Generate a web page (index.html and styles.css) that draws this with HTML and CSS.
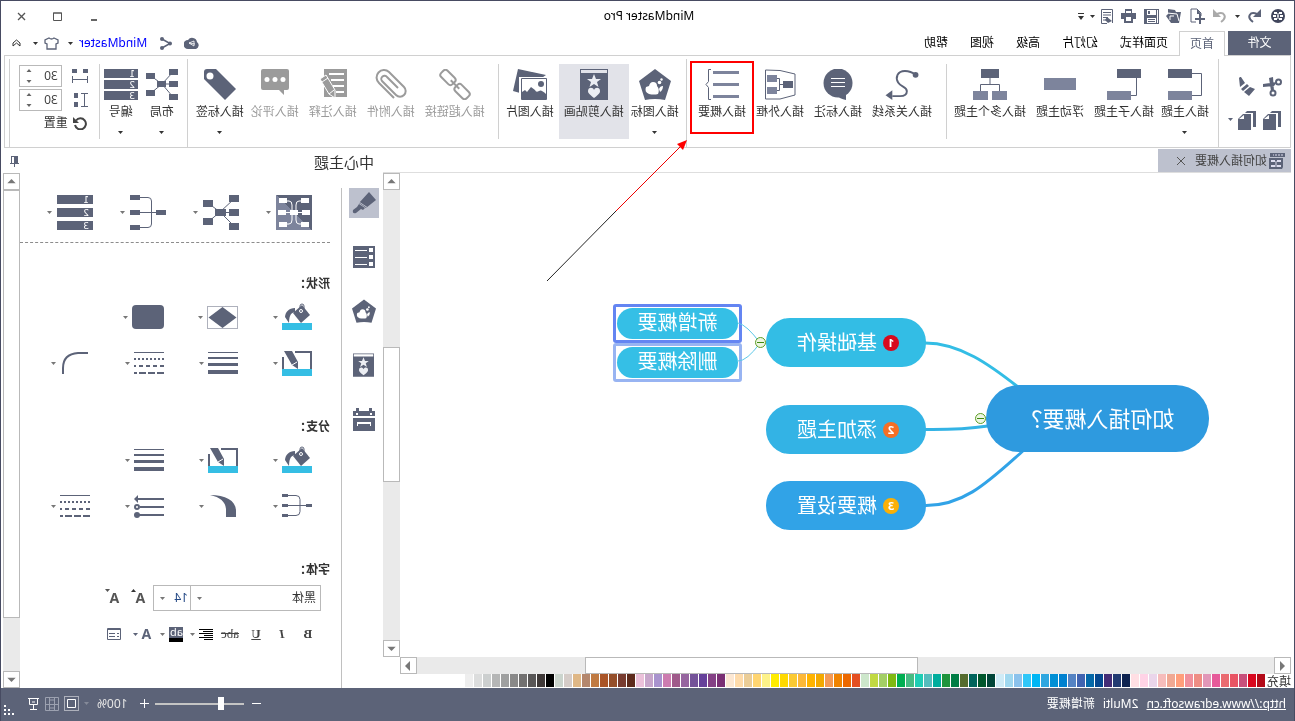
FILE: index.html
```html
<!DOCTYPE html>
<html lang="zh-CN">
<head>
<meta charset="utf-8">
<title>MindMaster Pro</title>
<link rel="stylesheet" href="styles.css">
</head>
<body>
<svg class="defs" aria-hidden="true">
  <defs>
    <linearGradient id="shade" x1="0" y1="0" x2="1" y2="1"><stop offset=".5" stop-color="#5c6378"/><stop offset=".5" stop-color="#7d849c"/></linearGradient>
    <symbol id="caret" viewBox="0 0 5 3"><path d="M0 0h5L2.500 3z" fill="currentColor"/></symbol>
    <symbol id="fill" viewBox="0 0 30 28"><path d="M0 20h30v7H0z" fill="#35bee4"/><path d="M10 2 19 10 11 20 2 12z" fill="currentColor"/><path d="M8 6V3a2 2 0 0 1 4 0v4" fill="none" stroke="currentColor"/><circle cx="11" cy="8" r="1.500" fill="#5c6378" stroke="#fff"/><path d="M17 5c6 0 10 4 10 9l-4 6c0-6-1-10-6-11z" fill="currentColor"/></symbol>
    <symbol id="pen" viewBox="0 0 30 25"><path d="M0 18h30v7H0z" fill="#35bee4"/><path d="M0 0h17v2H2v16H0zM28 6h2v12h-2zM20 0h8L20 14l-6 4V11z" fill="currentColor"/><path d="m15 11 5 3" stroke="#fff"/></symbol>
    <symbol id="weights" viewBox="0 0 30 23"><path d="M0 0h30v1H0zM0 5h30v2H0zM0 11h30v3H0zM0 18h30v4H0z" fill="currentColor"/></symbol>
    <symbol id="dashes" viewBox="0 0 30 23"><g stroke="currentColor" stroke-width="2"><path d="M0 .5h30" stroke-width="1"/><path d="M0 7h30" stroke-dasharray="2 2"/><path d="M0 14h30" stroke-dasharray="4 3"/><path d="M0 21h30" stroke-dasharray="7 2"/></g></symbol>
    <symbol id="pentagon" viewBox="0 0 32 31"><path d="M16 0 32 12 26 31Q16 29 6 31L0 12z" fill="currentColor"/><path d="M13 25q-2-5 1-8 0-4 4-4 3 0 4 4l3 1q2 5-3 7-5 1-9 0z" fill="#fff"/><path d="M8 17q3 0 4 3l-1 3q-3-2-3-6z" fill="#fff"/><circle cx="11.500" cy="13.500" r="1.800" fill="#fff"/><circle cx="9.500" cy="10.500" r="1.200" fill="#fff"/></symbol>
    <symbol id="clip" viewBox="0 0 28 31"><path d="M0 0h28v1H0zM0 0h1v5H0zM27 0h1v5h-1zM0 4h28v27H0z" fill="currentColor"/><path d="m14 5 2 5h5l-4 3 1.500 5-4.500-3-4.500 3 1.500-5-4-3h5zM14 29c-5-4-6-5-6-7 0-4 5-4 6-1 1-3 6-3 6 1 0 2-1 3-6 7z" fill="#eceef3"/></symbol>
    <symbol id="copy" viewBox="0 0 18 20"><path d="M0 1h9v1H1v15H0zM0 1h9l2 2H3v14H0z" fill="currentColor"/><path d="M5 4h8l5 5v11H5z" fill="currentColor"/><path d="m12 5 5 4h-5z" fill="#fff"/></symbol>
    <symbol id="tree" viewBox="0 0 36 35"><path d="M0 15h10v5H0zM26 0h10v5H26zM26 15h10v5H26zM26 30h10v5H26z" fill="currentColor"/><path d="M10 17.500h16M26 2.500h-8q-3.500 0-3.500 3.500v23q0 3.500 3.500 3.500h8" fill="none" stroke="currentColor"/></symbol>
    <symbol id="up" viewBox="0 0 10 6"><path d="M5 0 10 5H0z" fill="currentColor"/></symbol>
  </defs>
</svg>
<div class="app">
  <header class="titlebar">
    <div class="quick">
      <svg width="14" height="14" viewBox="0 0 14 14"><circle cx="7" cy="7" r="7" fill="#41465c"/><path d="M3 3h3v2H3zM8 3h3v2H8zM3 9h3v2H3zM8 9h3v2H8zM2 6h3v2H2zM9 6h3v2H9z" fill="#fff"/><path d="M6 7h2M7 4v6" stroke="#fff"/></svg>
      <button class="q-undo" aria-label="撤销"><svg width="14" height="14" viewBox="0 0 14 14"><path d="M8 13C15 8 11 2 4 5" fill="none" stroke="currentColor" stroke-width="2"/><path d="M0 0v8h8z" fill="currentColor"/></svg></button>
      <svg class="q-caret" width="5" height="3"><use href="#caret"/></svg>
      <button class="q-btn pale" aria-label="重做"><svg width="14" height="14" viewBox="0 0 14 14"><path d="M6 13C-1 8 3 2 10 5" fill="none" stroke="currentColor" stroke-width="2"/><path d="M14 0v8H6z" fill="currentColor"/></svg></button>
      <button class="q-btn" aria-label="新建"><svg width="15" height="16" viewBox="0 0 15 16"><path d="M4 8V5l4-4h6v13H9" fill="none" stroke="currentColor"/><path d="M8 1v5H4M0 10h4V6h2v4h4v2H6v4H4v-4H0z" fill="currentColor"/></svg></button>
      <button class="q-btn" aria-label="打开"><svg width="16" height="14" viewBox="0 0 16 14"><path d="M1 3h5l1-2 7-1v5l2 2-5 7H3z" fill="currentColor"/><path d="m3 12 2-7 10-1M8 7h4v4" fill="none" stroke="#fff"/></svg></button>
      <button class="q-btn" aria-label="保存"><svg width="15" height="15" viewBox="0 0 15 15"><path d="M0 0h15v15H0z" fill="currentColor"/><path d="M3 1h9v5H3zM3 9h9v5H3zM1 1h1v13H1z" fill="#fff"/><path d="M9 2h2v3H9zM4 10h7v1H4zM4 12h7v1H4z" fill="currentColor"/></svg></button>
      <button class="q-btn" aria-label="打印"><svg width="15" height="14" viewBox="0 0 15 14"><path d="M4 0h7v4h4v6h-3v4H3v-4H0V4h4z" fill="currentColor"/><path d="M5 8h5v4H5zM5 2h5v2H5z" fill="#fff"/></svg></button>
      <button class="q-btn narrow" aria-label="预览"><svg width="12" height="15" viewBox="0 0 12 15"><path d="M.5.5h11v14H6M.5.5V14M2 3.500h8M2 6h8M5 8.500h5M7 11h3" fill="none" stroke="currentColor"/><path d="m1 12 5-4 2 3-3 3z" fill="currentColor"/></svg></button>
      <svg class="q-caret" width="5" height="3"><use href="#caret"/></svg>
      <svg class="q-more" width="6" height="7" viewBox="0 0 6 7"><path d="M0 0h6v1H0zM0 3h6L3 7z" fill="#333"/></svg>
    </div>
    <h1 class="title">MindMaster Pro</h1>
    <div class="window-controls">
      <button aria-label="最小化"><svg width="9" height="9" viewBox="0 0 9 9"><path d="M1 7h6v2H1z" fill="#666"/></svg></button>
      <button aria-label="最大化"><svg width="9" height="9" viewBox="0 0 9 9"><path d="M.5 1h8v7.500h-8zM0 1h9" fill="none" stroke="#555"/></svg></button>
      <button aria-label="关闭"><svg width="9" height="9" viewBox="0 0 9 9"><path d="m1 1 7 7M8 1 1 8" stroke="#555" stroke-width="1.300"/></svg></button>
    </div>
  </header>

  <nav class="tabs">
    <button class="tab file">文件</button>
    <button class="tab active">首页</button>
    <button class="tab">页面样式</button>
    <button class="tab">幻灯片</button>
    <button class="tab">高级</button>
    <button class="tab">视图</button>
    <button class="tab">帮助</button>
    <div class="account">
      <svg width="16" height="12" viewBox="0 0 16 12"><path d="M4 12a4 4 0 0 1-1-7 5 5 0 0 1 9-2 4.500 4.500 0 0 1 0 9z" fill="#5c6378"/><path d="M11 6 6 4v5zM11 6 5 7" fill="none" stroke="#fff" stroke-width=".8"/></svg>
      <svg class="share" width="13" height="13" viewBox="0 0 13 13"><path d="m11 2-8 4.500L11 11" fill="none" stroke="#5c6378" stroke-width="1.500"/><circle cx="11" cy="2" r="2" fill="#5c6378"/><circle cx="3" cy="6.500" r="2" fill="#5c6378"/><circle cx="11" cy="11" r="2" fill="#5c6378"/></svg>
      <a href="#" class="user">MindMaster</a>
      <svg width="5" height="3"><use href="#caret"/></svg>
      <svg class="skin" width="15" height="13" viewBox="0 0 15 13"><path d="M5 1 1 3v3l2 1v5h9V7l2-1V3l-4-2q-2.500 2-5 0z" fill="none" stroke="#5c6378" stroke-width="1.300"/></svg>
      <svg width="5" height="3"><use href="#caret"/></svg>
      <svg class="collapse" width="9" height="8" viewBox="0 0 9 8"><path d="m1 4 3.500-3L8 4v3L4.500 4 1 7z" fill="none" stroke="#333"/></svg>
    </div>
  </nav>

  <section class="ribbon" aria-label="首页">
    <div class="group clipboard">
      <button aria-label="剪切"><svg width="20" height="20" viewBox="0 0 20 20"><g fill="none" stroke="currentColor" stroke-width="2"><circle cx="3.500" cy="5" r="2.500"/><circle cx="9" cy="16" r="2.500"/></g><path d="m5 5 14 2v3L8 9zM8 14 9 0l4 1-2 13z" fill="currentColor"/></svg></button>
      <button aria-label="格式刷"><svg width="18" height="20" viewBox="0 0 18 20"><path d="m16 0 1 1-1 9-5-4 4-6zM9 7l6 5-2 2-6-5zM6 10l6 5-5 4L1 12z" fill="currentColor"/></svg></button>
      <button aria-label="复制"><svg width="18" height="20"><use href="#copy"/></svg></button>
      <button class="paste" aria-label="粘贴"><svg width="18" height="20"><use href="#copy"/></svg><svg width="5" height="3"><use href="#caret"/></svg></button>
    </div>
    <div class="group first">
      <button class="tool menu"><svg width="34" height="31" viewBox="0 0 34 31"><path d="M10 4.500H.5v22H10" fill="none" stroke="currentColor"/><path d="M10 0h24v9H10z" fill="currentColor"/><path d="M10 22h24v9H10z" fill="#7d849c"/></svg><span>插入主题</span><svg class="down" width="5" height="3"><use href="#caret"/></svg></button>
      <button class="tool"><svg width="34" height="31" viewBox="0 0 34 31"><path d="M4.500 9v17.500H10" fill="none" stroke="currentColor"/><path d="M0 0h24v9H0z" fill="currentColor"/><path d="M10 22h24v9H10z" fill="#7d849c"/></svg><span>插入子主题</span></button>
      <button class="tool"><svg width="32" height="31" viewBox="0 0 32 31"><path d="M0 9h32v12H0z" fill="#7d849c"/></svg><span>浮动主题</span></button>
      <button class="tool"><svg width="34" height="31" viewBox="0 0 34 31"><path d="M17 9v6.500M7.500 22v-6.500h19V22" fill="none" stroke="currentColor"/><path d="M8 0h18v9H8z" fill="currentColor"/><path d="M0 22h15v9H0zM19 22h15v9H19z" fill="#7d849c"/></svg><span>插入多个主题</span></button>
    </div>
    <div class="group full">
      <button class="tool"><svg width="34" height="32" viewBox="0 0 34 32"><path d="M3 6Q8 2 14 2C22 2 24 9 21 14S12 18 12 23Q12 28 19 28h8" fill="none" stroke="currentColor" stroke-width="2"/><circle cx="3" cy="6" r="3" fill="currentColor"/><path d="m34 27-7-5v10z" fill="currentColor"/></svg><span>插入关系线</span></button>
      <button class="tool"><svg width="30" height="31" viewBox="0 0 30 31"><circle cx="15" cy="14" r="14.500" fill="currentColor"/><path d="M7 24v7q6-1 10-5z" fill="currentColor"/><path d="M8 9.500h14M8 13.500h14M8 17.500h14" stroke="#fff"/></svg><span>插入标注</span></button>
      <button class="tool"><svg width="32" height="31" viewBox="0 0 32 31"><path d="m1 5 15-3.500L30.500 1v29H16L1 26z" fill="none" stroke="currentColor"/><path d="M12 15.500h4.500M20 9.500h-3.500v12H20" fill="none" stroke="currentColor"/><path d="M3 12h10v7H3z" fill="currentColor"/><path d="M19 6h10v7H19zM19 18h10v7H19z" fill="#7d849c"/></svg><span>插入外框</span></button>
      <button class="tool marked"><svg width="34" height="31" viewBox="0 0 34 31"><path d="M0 2h26v3H0zM0 14h26v3H0zM0 26h26v3H0z" fill="#7d849c"/><path d="M28 .5h2.500v12l2.500 3-2.500 3v12H28" fill="none" stroke="currentColor"/></svg><span>插入概要</span></button>
    </div>
    <div class="group third">
      <button class="tool menu"><svg width="32" height="31"><use href="#pentagon"/></svg><span>插入图标</span><svg class="down" width="5" height="3"><use href="#caret"/></svg></button>
      <button class="tool on"><svg width="28" height="31"><use href="#clip"/></svg><span>插入剪贴画</span></button>
      <button class="tool"><svg width="34" height="31" viewBox="0 0 34 31"><path d="m1 6 28-6 5 22-7 2z" fill="currentColor"/><path d="M-1 8h29v24H-1z" fill="#fff"/><path d="M.5 9.500h25v21H.5z" fill="#fff" stroke="currentColor"/><circle cx="6" cy="15" r="3" fill="currentColor"/><path d="M1 25q5-5 7-3 3 2 4-1l4-3 4 5 2-2 3 2v8H1z" fill="currentColor"/></svg><span>插入图片</span></button>
    </div>
    <div class="group full fourth">
      <button class="tool off"><svg width="32" height="31" viewBox="0 0 32 31"><g fill="none" stroke="currentColor" stroke-width="2" transform="rotate(-45 16 15.500)"><rect x="-2" y="11" width="16" height="9" rx="3"/><rect x="18" y="11" width="16" height="9" rx="3"/><path d="M10 15.500h12"/></g></svg><span>插入超链接</span></button>
      <button class="tool off"><svg width="32" height="31" viewBox="0 0 32 31"><path d="M13 29 28 14a7 7 0 0 0-10-11L3 18a5 5 0 0 0 8 8l14-14a3 3 0 0 0-5-4L9 19" fill="none" stroke="currentColor" stroke-width="2"/></svg><span>插入附件</span></button>
      <button class="tool off"><svg width="28" height="31" viewBox="0 0 28 31"><path d="M0 0h23v28H0z" fill="currentColor"/><path d="M3 5h15M3 11h13M3 17h11M3 23h8" stroke="#fff" stroke-width="2"/><path d="m21 6 6 4-9 15-6 4V21z" fill="currentColor" stroke="#fff"/><path d="m13 21 5 4M19 9l6 4" stroke="#fff"/></svg><span>插入注释</span></button>
      <button class="tool off"><svg width="28" height="31" viewBox="0 0 28 31"><path d="M2 0h24q2 0 2 2v17q0 2-2 2H10l-5 5v-5H2q-2 0-2-2V2q0-2 2-2z" fill="currentColor"/><g fill="#fff"><circle cx="6" cy="10.500" r="2.500"/><circle cx="14" cy="10.500" r="2.500"/><circle cx="22" cy="10.500" r="2.500"/></g></svg><span>插入评论</span></button>
      <button class="tool menu"><svg width="32" height="31" viewBox="0 0 32 31"><path d="M20 0h9q3 0 3 3v7L11 31 0 20z" fill="currentColor"/><circle cx="26" cy="7" r="3.500" fill="#fff"/></svg><span>插入标签</span><svg class="down" width="5" height="3"><use href="#caret"/></svg></button>
    </div>
    <div class="group fifth">
      <button class="tool"><svg width="32" height="31" viewBox="0 0 32 31"><path d="m5 3 11 12L27 7M5 28l11-13 11 9M5 15h11" fill="none" stroke="currentColor"/><path d="M0 0h9v6H0zM0 12h9v6H0zM0 25h9v6H0zM12 12h9v6h-9zM23 4h9v6h-9zM23 21h9v6h-9z" fill="currentColor"/></svg><span>布局</span><svg class="down" width="5" height="3"><use href="#caret"/></svg></button>
      <button class="tool"><svg width="34" height="31" viewBox="0 0 34 31"><path d="M0 0h34v9H0zM0 11h34v9H0zM0 22h34v9H0z" fill="currentColor"/><g class="digits"><text x="3" y="8">1</text><text x="3" y="19">2</text><text x="3" y="30">3</text></g></svg><span>编号</span><svg class="down" width="5" height="3"><use href="#caret"/></svg></button>
    </div>
    <div class="group spacing full">
      <label><svg width="16" height="14" viewBox="0 0 16 14"><path d="M0 0h5v4H0zM11 0h5v4h-5zM0 7h1v7H0zM15 7h1v7h-1zM1 10h14v1H1z" fill="currentColor"/></svg><span class="spin"><input type="text" inputmode="numeric" value="30" aria-label="水平间距"><svg width="6" height="14" viewBox="0 0 6 14"><path d="M.5 3 3 0l2.500 3zM.5 11 3 14l2.500-3z" fill="#666"/></svg></span></label>
      <label><svg width="16" height="14" viewBox="0 0 16 14"><path d="M0 0h7v1H4v12h3v1H0v-1h3V1H0zM10 0h4v5h-4zM10 9h4v5h-4z" fill="currentColor"/></svg><span class="spin"><input type="text" inputmode="numeric" value="30" aria-label="垂直间距"><svg width="6" height="14" viewBox="0 0 6 14"><path d="M.5 3 3 0l2.500 3zM.5 11 3 14l2.500-3z" fill="#666"/></svg></span></label>
      <button class="reset"><svg width="14" height="14" viewBox="0 0 14 14"><path d="M11 4.500A5.500 5.500 0 1 0 12 9" fill="none" stroke="#444" stroke-width="2"/><path d="M14 1v6H8z" fill="#444"/></svg>重置</button>
    </div>
  </section>

  <main class="main">
    <div class="workspace">
      <div class="doc-tabs">
        <button class="doc-tab"><svg width="16" height="16" viewBox="0 0 16 16"><path d="M0 0h15v4H0zM2 5h14v11H3L2 14z" fill="currentColor"/><path d="M2 2h10" stroke="#dde" stroke-dasharray="2 1"/><path d="M4 7h4v2H4zM10 7h4v2h-4zM4 12h4v2H4zM10 12h4v2h-4zM8.500 8h1v6h-1z" fill="#dde"/></svg><span>如何插入概要</span><svg width="8" height="8" viewBox="0 0 8 8"><path d="m0 0 8 8M8 0 0 8" stroke="#555"/></svg></button>
      </div>
      <div class="stage">
        <div class="canvas">
          <svg class="links" aria-hidden="true"><g fill="none" stroke-width="3" transform="translate(-4 -173)">
            <path d="M277 387C305 365 335 343 370 343" stroke="#33bde5"/>
            <path d="M307 426Q335 430 370 429.500" stroke="#33b3e5"/>
            <path d="M271 450C305 480 330 506 370 505.500" stroke="#31a3e7"/>
            <path d="M535 343Q548 325 557 323M535 343Q548 361 557 361" stroke="#5cc8e8" stroke-width="1"/>
            <path d="M748 281 679 211" stroke="#222" stroke-width="1"/>
            <path d="M679 211 613 145" stroke="#e00" stroke-width="1"/>
            <path d="m608 140 10 4-6 6z" fill="#f00"/>
          </g></svg>
          <div class="node root">如何插入概要？</div>
          <div class="node child n1"><i class="badge red">1</i>基础操作</div>
          <div class="node child n2"><i class="badge orange">2</i>添加主题</div>
          <div class="node child n3"><i class="badge amber">3</i>概要设置</div>
          <div class="pick s1"><div class="summary">新增概要</div></div>
          <div class="pick s2"><div class="summary">删除概要</div></div>
          <button class="fold f1" aria-label="折叠"></button>
          <button class="fold f2" aria-label="折叠"></button>
        </div>
        <div class="vbar"><button aria-label="向上"><svg width="9" height="5"><use href="#up"/></svg></button><div class="thumb"></div><button aria-label="向下"><svg class="turn" width="9" height="5"><use href="#up"/></svg></button></div>
      </div>
      <div class="hbar"><button aria-label="向左"><svg width="6" height="10" viewBox="0 0 6 10"><path d="M5 0v10L0 5z" fill="currentColor"/></svg></button><div class="thumb"></div><button aria-label="向右"><svg width="6" height="10" viewBox="0 0 6 10"><path d="M1 0v10l5-5z" fill="currentColor"/></svg></button></div>
      <div class="palette"><span>填充</span><div class="swatches" id="swatches"></div></div>
    </div>

    <aside class="panel">
      <div class="panel-head"><h2>中心主题</h2><svg width="9" height="11" viewBox="0 0 9 11"><path d="M1 0h7v7h1v1H5v3H4V8H0V7h1z" fill="#5c6378"/><path d="M5 1h2v6H5z" fill="#fff"/></svg></div>
      <div class="panel-body">
        <div class="strip">
          <button class="on" aria-label="样式"><svg width="24" height="24" viewBox="0 0 24 24"><path d="m0 9 7-8 10 11-7 5zM11 17l6-4 2 3 4 3q1 4-3 3l-5-4-2 1z" fill="currentColor"/><path d="m8 17 9-6" stroke="#bdc1ce"/></svg></button>
          <button aria-label="大纲"><svg width="22" height="22" viewBox="0 0 22 22"><path d="M0 0h22v22H0z" fill="currentColor"/><path d="M2 2h4v4H2zM2 9h4v4H2zM2 16h4v4H2zM8 4h12v1H8zM8 11h12v1H8zM8 18h12v1H8z" fill="#fff"/></svg></button>
          <button aria-label="图标"><svg width="24" height="24"><use href="#pentagon"/></svg></button>
          <button aria-label="剪贴画"><svg width="21" height="24"><use href="#clip"/></svg></button>
          <button aria-label="任务"><svg width="22" height="23" viewBox="0 0 22 23"><path d="M3 0h3v3h10V0h3v3h3v5H0V3h3zM0 10h22v13H0z" fill="currentColor"/><path d="M4 14h14v4h-1v-2H5v2H4zM3 5h2v2H3zM17 5h2v2h-2z" fill="#fff"/></svg></button>
        </div>
        <div class="props">
          <div class="layouts">
            <button><svg width="36" height="35" viewBox="0 0 36 35"><path d="M0 0h36v35H0z" fill="url(#shade)"/><path d="M10 6h3q3 0 3 4v15q0 4-3 4h-3M26 6h-3q-3 0-3 4v15q0 4 3 4h3M5 17.500h26" fill="none" stroke="#fff"/><path d="M3 3h8v5H3zM25 3h8v5h-8zM2 15h8v5H2zM26 15h8v5h-8zM14 15h8v5h-8zM3 27h8v5H3zM25 27h8v5h-8z" fill="#fff"/></svg><svg width="5" height="3"><use href="#caret"/></svg></button>
            <button><svg width="36" height="35" viewBox="0 0 36 35"><path d="m5 4 14 13L31 8M5 31l14-14 12 10M5 17.500h14" fill="none" stroke="currentColor"/><path d="M0 0h10v7H0zM0 14h10v7H0zM0 28h10v7H0zM13 14h11v7H13zM26 5h10v7H26zM26 23h10v7H26z" fill="currentColor"/></svg><svg width="5" height="3"><use href="#caret"/></svg></button>
            <button><svg width="36" height="35"><use href="#tree"/></svg><svg width="5" height="3"><use href="#caret"/></svg></button>
            <button><svg width="36" height="35" viewBox="0 0 36 35"><path d="M0 0h36v9H0zM0 13h36v9H0zM0 26h36v9H0z" fill="currentColor"/><g class="digits"><text x="4" y="8">1</text><text x="4" y="21">2</text><text x="4" y="34">3</text></g></svg><svg width="5" height="3"><use href="#caret"/></svg></button>
          </div>
          <h3>形状：</h3>
          <div class="options">
            <button><svg width="30" height="28"><use href="#fill"/></svg><svg width="5" height="3"><use href="#caret"/></svg></button>
            <button><svg width="31" height="23" viewBox="0 0 31 23"><path d="M.5.5h30v22H.5z" fill="none" stroke="currentColor" stroke-dasharray="1 1"/><path d="m15.500 1 14 10.500-14 10.500-14-10.500z" fill="currentColor"/></svg><svg width="5" height="3"><use href="#caret"/></svg></button>
            <button><svg width="32" height="24" viewBox="0 0 32 24"><rect width="32" height="24" rx="4" fill="currentColor"/></svg><svg width="5" height="3"><use href="#caret"/></svg></button>
          </div>
          <div class="options">
            <button><svg width="30" height="25"><use href="#pen"/></svg><svg width="5" height="3"><use href="#caret"/></svg></button>
            <button><svg width="30" height="23"><use href="#weights"/></svg><svg width="5" height="3"><use href="#caret"/></svg></button>
            <button><svg width="30" height="23"><use href="#dashes"/></svg><svg width="5" height="3"><use href="#caret"/></svg></button>
            <button><svg width="30" height="23" viewBox="0 0 30 23"><path d="M2 1h10q15 1 15 15v6" fill="none" stroke="currentColor" stroke-width="2"/></svg><svg width="5" height="3"><use href="#caret"/></svg></button>
          </div>
          <h3>分支：</h3>
          <div class="options">
            <button><svg width="30" height="28"><use href="#fill"/></svg><svg width="5" height="3"><use href="#caret"/></svg></button>
            <button><svg width="30" height="25"><use href="#pen"/></svg><svg width="5" height="3"><use href="#caret"/></svg></button>
            <button><svg width="30" height="23"><use href="#weights"/></svg><svg width="5" height="3"><use href="#caret"/></svg></button>
          </div>
          <div class="options">
            <button><svg width="30" height="24" viewBox="0 0 30 24"><path d="M0 10h6v3H0zM24 0h6v3h-6zM24 10h6v3h-6zM24 20h6v3h-6z" fill="currentColor"/><path d="M6 11.500h18M24 1.500h-8q-4 0-4 4v12q0 4 4 4h8" fill="none" stroke="currentColor"/></svg><svg width="5" height="3"><use href="#caret"/></svg></button>
            <button><svg width="30" height="22" viewBox="0 0 30 22"><path d="M28 0Q13 3 12 14v8H2V16C2 6 12 0 28 0z" fill="currentColor"/></svg><svg width="5" height="3"><use href="#caret"/></svg></button>
            <button><svg width="30" height="23" viewBox="0 0 30 23"><path d="M0 4h26M0 12h24M0 20h26" stroke="currentColor" stroke-width="2"/><path d="m30 4-4-4v8z" fill="currentColor"/><circle cx="27" cy="12" r="2" fill="#fff" stroke="currentColor" stroke-width="2"/><circle cx="27" cy="20" r="3" fill="currentColor"/></svg><svg width="5" height="3"><use href="#caret"/></svg></button>
            <button><svg width="30" height="23"><use href="#dashes"/></svg><svg width="5" height="3"><use href="#caret"/></svg></button>
          </div>
          <h3>字体：</h3>
          <div class="font-row">
            <span class="pickbox family"><select aria-label="字体"><option>黑体</option></select><svg width="5" height="3"><use href="#caret"/></svg></span>
            <span class="pickbox size"><select aria-label="字号"><option>14</option></select><svg width="5" height="3"><use href="#caret"/></svg></span>
            <button class="grow">A<svg width="5" height="3" viewBox="0 0 5 3"><path d="M0 3h5L2.500 0z" fill="#333"/></svg></button>
            <button class="grow">A<svg width="5" height="3"><use href="#caret"/></svg></button>
          </div>
          <div class="format">
            <button class="serif">B</button>
            <button class="serif"><i>I</i></button>
            <button class="serif"><u>U</u></button>
            <button class="serif plain"><s>abc</s></button>
            <button class="pair"><svg width="14" height="11" viewBox="0 0 14 11"><path d="M0 .5h14M0 2.500h10M0 4.500h14M0 6.500h9M0 8.500h14M0 10.500h9" stroke="#000"/></svg><svg width="5" height="3"><use href="#caret"/></svg></button>
            <button class="pair"><span class="mark">ab</span><svg width="5" height="3"><use href="#caret"/></svg></button>
            <button class="pair letter">A<svg width="5" height="3"><use href="#caret"/></svg></button>
            <button><svg width="14" height="12" viewBox="0 0 14 12"><path d="M.5.500h13v11H.5zM0 1.500h14" fill="none" stroke="currentColor"/><path d="M2 5h2v1H2zM6 5h6v1H6zM2 8h2v1H2zM6 8h6v1H6z" fill="currentColor"/></svg></button>
          </div>
        </div>
        <div class="vbar panel-bar"><button aria-label="向上"><svg width="9" height="5"><use href="#up"/></svg></button><div class="thumb"></div><button aria-label="向下"><svg class="turn" width="9" height="5"><use href="#up"/></svg></button></div>
      </div>
    </aside>
  </main>

  <footer class="status">
    <a href="#">http://www.edrawsoft.cn</a>
    <span>2Multi</span>
    <span>新增概要</span>
    <div class="zoom">
      <button aria-label="缩小"><svg width="9" height="9" viewBox="0 0 9 9"><path d="M0 4.500h9" stroke="#fff"/></svg></button>
      <input type="range" min="0" max="100" value="23" aria-label="缩放">
      <button aria-label="放大"><svg width="9" height="9" viewBox="0 0 9 9"><path d="M0 4.500h9M4.500 0v9" stroke="#fff"/></svg></button>
      <span class="percent">100%</span>
      <svg class="faint" width="5" height="3"><use href="#caret"/></svg>
      <button aria-label="适合页面"><svg width="15" height="15" viewBox="0 0 15 15"><path d="M.5.5h14v14H.5z" fill="none" stroke="#fff" stroke-dasharray="1 1"/><path d="M3.500 3.500h8v8h-8z" fill="none" stroke="#fff"/></svg></button>
      <button class="dim" aria-label="适合宽度"><svg width="14" height="14" viewBox="0 0 14 14"><path d="M.5.5h13v13H.5zM4.500 3v8h5V3zM1 7.500h12M4.500 0v14M9.500 0v14" fill="none" stroke="#9ca1b0"/></svg></button>
      <button aria-label="演示"><svg width="11" height="12" viewBox="0 0 11 12"><path d="M0 .5h11M1.500.5v6h8v-6M5.500 7v4M2 11.500h7M4 4h3" fill="none" stroke="#fff"/></svg></button>
      <svg class="grip" width="10" height="10" viewBox="0 0 10 10"><path d="M8 0h2v2H8zM4 4h2v2H4zM8 4h2v2H8zM0 8h2v2H0zM4 8h2v2H4zM8 8h2v2H8z" fill="#fff"/></svg>
    </div>
  </footer>
</div>
<script src="palette.js"></script>
</body>
</html>
```
FILE: styles.css
```css
* { box-sizing: border-box; }

body {
  margin: 0;
  font: 12px/16px "Noto Sans", "Noto Sans CJK SC", sans-serif;
  color: #333;
  background: #fff;
}

button {
  display: flex;
  align-items: center;
  justify-content: center;
  margin: 0;
  padding: 0;
  border: 0;
  background: none;
  font: inherit;
  color: #5c6378;
}

svg { display: block; flex: none; }
h1, h2, h3 { margin: 0; font-size: 12px; font-weight: 400; }
.defs { position: absolute; width: 0; height: 0; }

/* The whole window is shown mirrored. */
.app {
  display: flex;
  flex-direction: column;
  min-height: 100vh;
  border: 1px solid #474b62;
  border-bottom: 0;
  transform: scaleX(-1);
}

/* Title bar */
.titlebar {
  display: grid;
  grid-template-columns: 1fr auto 1fr;
  align-items: center;
  height: 30px;
  padding: 0 12px 0 9px;
}
.quick { display: flex; align-items: center; color: #5c6378; }
.q-undo { width: 20px; margin-left: 7px; }
.q-btn { width: 23px; }
.q-btn.narrow { width: 20px; }
.q-caret { margin: 0 3px 0 4px; color: #333; }
.q-more { margin-left: 4px; }
.q-btn.narrow + .q-caret { margin: 0 2px; }
.pale { color: #aaa; }
.title { font-size: 12px; color: #000; }
.window-controls { display: flex; justify-content: flex-end; }
.window-controls button { width: 36px; height: 24px; }
.window-controls button:last-child { width: 18px; margin-left: 9px; }

/* Tabs */
.tabs { display: flex; height: 24px; padding: 0 3px; position: relative; z-index: 1; }
.tab { padding: 0 11px; color: #000; }
.tab.file { width: 63px; margin-right: 3px; background: #5c6378; color: #fff; }
.tab.active {
  height: 25px;
  padding: 0 10px;
  border: 1px solid #d0d0d0;
  border-bottom: 0;
  background: #fff;
  color: #5c6378;
}
.account { display: flex; align-items: center; gap: 6px; margin-left: auto; padding-right: 8px; }
.account .share { margin-left: 5px; }
.account .user { margin-left: 7px; color: #00f; text-decoration: none; }
.account .skin { margin-left: 3px; }
.account .collapse { margin-left: 6px; }

/* Ribbon */
.ribbon {
  display: flex;
  height: 93px;
  margin: 0 3px;
  border: 1px solid #d0d0d0;
}
.group {
  display: flex;
  gap: 10px;
  margin-top: 3px;
  padding: 5px 7px 8px 10px;
  border-right: 1px solid #d0d0d0;
}
.group.first, .group.third, .group.fifth { margin: 8px 0; padding-top: 0; padding-bottom: 0; }
.group.first { padding-left: 12px; }
.group.full { padding-left: 14px; padding-right: 11px; }
.group.clipboard {
  display: grid;
  grid-template-columns: 25px 32px;
  gap: 8px 0;
  align-content: center;
  width: 72px;
  padding: 0 5px;
}
.clipboard button { height: 25px; }
.clipboard button:nth-child(even) { justify-content: flex-start; padding-left: 4px; }
.clipboard .paste { gap: 5px; }
.tool {
  position: relative;
  flex-direction: column;
  justify-content: flex-start;
  gap: 4px;
  padding-top: 5px;
  white-space: nowrap;
}
.tool span { color: #333; }
.tool > svg:first-child { height: 31px; }
.tool.menu { margin: 0 -3px; }
.tool .down { margin-top: 7px; color: #333; }
.tool.off, .tool.off span { color: #9b9b9b; }
.tool.on { margin: 0 -5px; padding: 5px 5px 0; background: #e2e3e9; }
.tool.marked::after {
  content: "";
  position: absolute;
  inset: -3px -8px 5px;
  border: 2px solid #f00;
}
.group.full.fourth { padding-right: 11px; padding-left: 13px; }
.group.fifth { gap: 17px; padding: 0 9px 0 13px; }
.fifth .tool { width: 24px; }
.digits { font: 9px "DejaVu Sans", sans-serif; fill: #fff; }
.group.spacing { flex-direction: column; gap: 2px; width: 90px; padding: 6px 8px 0 11px; }
.spacing label { display: flex; align-items: center; gap: 10px; color: #5c6378; }
.spin { display: flex; align-items: center; width: 43px; height: 22px; padding-right: 6px; border: 1px solid #b9b9b9; }
.spin input { width: 100%; min-width: 0; padding: 0 3px; border: 0; background: none; font: inherit; color: #444; }
.reset { gap: 5px; justify-content: flex-start; height: 20px; padding-left: 1px; color: #333; }

/* Main area */
.main { display: flex; flex: 1; min-height: 0; }
.workspace { display: flex; flex-direction: column; flex: 1; padding-left: 3px; }
.doc-tabs { height: 25px; padding-top: 1px; border-bottom: 1px solid #dedede; }
.doc-tab { gap: 2px; height: 23px; padding: 0 19px 0 6px; background: #bdc1ce; }
.doc-tab span { color: #444; }
.doc-tab svg:last-child { margin-left: 8px; }
.stage { display: flex; flex: 1; }
.canvas { position: relative; flex: 1; background: #fff; }
.links { position: absolute; z-index: 2; left: 0; top: 0; width: 1px; height: 1px; overflow: visible; }
.node {
  position: absolute;
  z-index: 3;
  display: flex;
  align-items: center;
  justify-content: center;
  color: #fff;
  white-space: nowrap;
}
.root { left: 82px; top: 212px; width: 223px; height: 67px; padding-bottom: 2px; border-radius: 33px; background: #2e9adf; font-size: 22px; }
.child { left: 365px; width: 160px; height: 49px; gap: 6px; padding-right: 4px; border-radius: 24px; font-size: 20px; }
.n1 { top: 145px; background: #33bde5; }
.n2 { top: 232px; background: #33b3e5; }
.n3 { top: 308px; background: #31a3e7; }
.badge { width: 16px; height: 16px; border-radius: 8px; font: bold 11px/16px "Noto Sans", sans-serif; text-align: center; }
.red { background: #d8091d; }
.orange { background: #f56f25; }
.amber { background: #fbb006; }
.pick { position: absolute; left: 549px; width: 129px; padding: 1px; border: 3px solid #6485f2; border-radius: 3px; }
.summary { height: 31px; border-radius: 16px; background: #35bfe6; color: #fff; font-size: 20px; line-height: 29px; text-align: center; }
.s1 { top: 131px; }
.s2 { top: 170px; border-color: #98b4f2; }
.fold {
  position: absolute;
  z-index: 4;
  width: 11px;
  height: 11px;
  border: 1px solid #5e9e26;
  border-radius: 6px;
  background: #edf6e2;
}
.fold::after { content: ""; width: 7px; height: 1px; background: #3f8a10; }
.f1 { left: 305px; top: 240px; }
.f2 { left: 525px; top: 164px; }

/* Scroll bars */
.vbar { display: grid; grid-template-rows: 17px 157fr 135fr 158fr 17px; flex: none; width: 17px; background: #eaeaea; }
.vbar button, .hbar button { height: 17px; border: 1px solid #b9b9b9; background: #fff; color: #777; }
.vbar .thumb, .hbar .thumb { border: 1px solid #b9b9b9; background: #fff; }
.vbar .thumb { grid-row: 3; }
.vbar button:last-child { grid-row: 5; }
.panel-bar { grid-template-rows: 17px 428fr 53fr 17px; }
.panel-bar .thumb { grid-row: 2; }
.panel-bar button:last-child { grid-row: 4; }
.turn { transform: rotate(180deg); }
.hbar { display: grid; grid-template-columns: 17px 356fr 333fr 168fr 17px; height: 17px; margin-right: 17px; background: #eaeaea; }
.hbar .thumb { grid-column: 3; }
.hbar button:last-child { grid-column: 5; }
.hbar button, .hbar .thumb { grid-row: 1; }

/* Fill palette */
.palette { display: flex; gap: 2px; height: 14px; }
.palette span { line-height: 15px; }
.swatches { display: flex; gap: 1px; height: 13px; }
.swatch { width: 8px; height: 13px; padding: 0; }

/* Side panel */
.panel { display: flex; flex-direction: column; flex: none; width: 382px; padding-right: 2px; }
.panel-head { display: flex; align-items: center; justify-content: space-between; height: 25px; padding: 2px 7px 0 9px; }
.panel-head h2 { font-size: 15px; line-height: 20px; }
.panel-body { display: flex; flex: 1; }
.strip { display: flex; flex-direction: column; flex: none; gap: 24px; width: 42px; margin-top: 15px; padding-left: 4px; border-right: 1px solid #c0c0c0; }
.strip button { width: 30px; height: 30px; }
.strip .on { background: #bdc1ce; }
.props { flex: 1; min-width: 0; padding: 22px 0 0 11px; }
.layouts { display: grid; grid-template-columns: repeat(4, 73px); padding: 0 0 12px 18px; border-bottom: 1px dashed #8c8c8c; }
.layouts button { justify-content: flex-start; gap: 5px; }
.props button > svg:last-child:not(:first-child) { color: #777; }
.props h3 { margin-top: 31px; font: 700 12px/20px "Noto Sans", "Noto Sans CJK TC", sans-serif; }
.options { display: grid; grid-template-columns: repeat(4, 74px); height: 46px; padding-left: 18px; }
.options button { justify-content: flex-start; gap: 4px; }
.font-row { display: flex; margin-top: 5px; padding-left: 9px; }
.pickbox { display: flex; align-items: center; height: 26px; border: 1px solid #b9b9b9; padding-right: 6px; color: #777; }
.pickbox select { flex: 1; min-width: 0; padding: 0 4px; border: 0; appearance: none; background: none; font: inherit; color: #333; }
.pickbox.family { width: 131px; }
.pickbox.size { width: 38px; margin-left: -1px; }
.pickbox.size select { padding: 0 0 0 2px; color: #264a86; }
.grow { align-items: center; width: 26px; padding-left: 4px; font-size: 14px; font-weight: 700; color: #555; }
.grow svg { margin-bottom: 16px; }
.format { display: flex; align-items: center; height: 24px; margin-top: 11px; padding-left: 9px; }
.format button { flex: none; width: 26px; }
.serif { font: bold 13px "Liberation Serif", serif; color: #444; }
.format .plain { font-weight: 400; }
.format .pair { gap: 4px; width: 30px; }
.format .letter { font-size: 14px; font-weight: 700; }
.mark { width: 14px; height: 15px; border-bottom: 4px solid #000; background: #5c6378; color: #fff; font-size: 11px; line-height: 10px; }

/* Status bar */
.status { display: flex; align-items: center; gap: 8px; height: 33px; padding: 0 3px 2px 8px; background: #5c6378; color: #fff; }
.status a { color: #fff; }
.zoom { display: flex; align-items: center; margin-left: auto; }
.zoom input { appearance: none; width: 89px; height: 14px; margin: 0 6px 0 8px; background: linear-gradient(#c4c4c4, #c4c4c4) center / 100% 2px no-repeat; }
.zoom input::-webkit-slider-thumb { appearance: none; width: 6px; height: 13px; background: #fff; }
.percent { margin: 0 6px 0 12px; color: #e6e6e6; }
.faint { margin: 0 5px 0 2px; color: #858a99; }
.zoom .dim { margin: 0 6px 0 5px; }
.grip { align-self: flex-end; margin: 12px 0 0 14px; }
```
FILE: palette.js
```js
const colors = (
  "b30a18 d9071f c8507c e95464 ea6a70 e65a9a e197b8 ee8d84 f0909c ff9e7b f0a893 f6bcbb ead5ea ffd3e6 ffdfe4 " +
  "0e2350 223b72 432c76 05478f 0468a8 4063b0 5583c3 0081d0 008fd5 2fa7e0 00b6f4 30c7f8 8bc2ec a0d8ef cfebf6 " +
  "004538 00572c 00645c 556c2e 007d45 1f943c 00ad9d 55bdbd 1fcdb4 46bb83 00ae52 80b912 a4cf66 c1d942 cde7cb " +
  "e44f21 ec6800 f08300 f49a55 f3a900 ffb300 fdb838 fbca33 ffd900 ffec00 fdf289 ffd571 ebcd97 fedbab fce7d2 " +
  "7a2f74 844085 66419a 745399 96659f 9f5a8a cd7cb0 a993ce c7a6cb ebc1da " +
  "5d2a1b 783c30 954f2a aa5528 c07a42 b4876d dfb786 d5ccc8 cbd4cd " +
  "000000 3f3938 595757 727171 898989 9fa0a0 b5b6b6 cccfcf dcdddd eeeeee"
).split(" ");

const holder = document.getElementById("swatches");
for (const color of colors) {
  const swatch = document.createElement("button");
  swatch.className = "swatch";
  swatch.style.background = "#" + color;
  swatch.setAttribute("aria-label", "#" + color);
  holder.append(swatch);
}
```
